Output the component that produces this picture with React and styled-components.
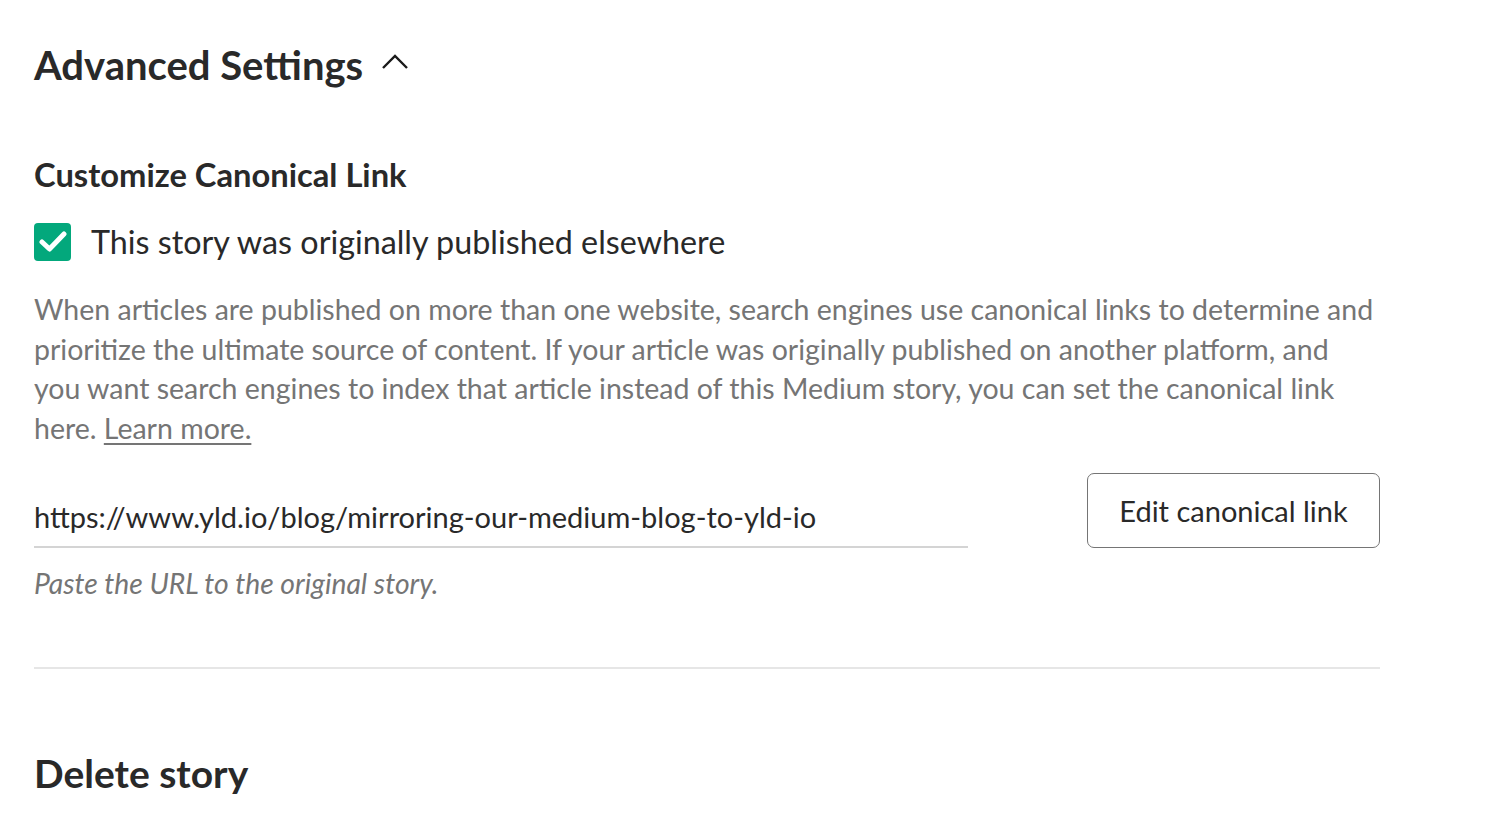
import React from "react";
import styled, { createGlobalStyle } from "styled-components";

const GlobalStyle = createGlobalStyle`
  body {
    margin: 0;
    background: #fff;
    font-family: Lato, "Open Sans", sans-serif;
    color: rgba(0, 0, 0, 0.84);
  }
`;

const Page = styled.div`
  width: 1346px;
  padding: 40px 0 0 34px;
`;

const Title = styled.h1`
  display: flex;
  align-items: center;
  gap: 18px;
  margin: 0;
  font-size: 40px;
  line-height: 50px;
  font-weight: 700;
  color: #292929;
`;

const Caret = styled.svg`
  width: 28px;
  height: 18px;
  margin-top: -6px;
`;

const SubTitle = styled.h2`
  margin: 65px 0 0;
  font-size: 32.7px;
  line-height: 40px;
  font-weight: 700;
  color: #292929;
`;

const CheckRow = styled.label`
  display: flex;
  align-items: center;
  gap: 20px;
  margin-top: 27px;
  font-size: 32.3px;
  line-height: 40px;
  color: #292929;
`;

const Box = styled.span`
  width: 37px;
  height: 38px;
  border-radius: 4px;
  background: #03a87c;
  display: flex;
  align-items: center;
  justify-content: center;
`;

const Help = styled.p`
  margin: 28px 0 0;
  font-size: 28.5px;
  line-height: 39.7px;
  color: #757575;
  white-space: nowrap;
`;

const More = styled.a`
  color: #757575;
  text-decoration: underline;
  text-underline-offset: 4px;
`;

const LinkRow = styled.div`
  display: flex;
  align-items: flex-start;
  justify-content: space-between;
  margin-top: 24px;
`;

const Field = styled.div`
  width: 934px;
  padding-top: 24px;
`;

const UrlText = styled.div`
  font-size: 29px;
  line-height: 40px;
  color: #292929;
  padding-bottom: 9px;
  border-bottom: 2px solid #d4d4d4;
`;

const Hint = styled.div`
  margin-top: 17px;
  font-size: 28.3px;
  line-height: 36px;
  font-style: italic;
  color: #757575;
`;

const Button = styled.button`
  width: 293px;
  height: 75px;
  border: 1.5px solid #757575;
  border-radius: 7px;
  background: #fff;
  font-family: inherit;
  font-size: 29px;
  color: #292929;
`;

const Divider = styled.hr`
  margin: 66px 0 0;
  border: 0;
  border-top: 2px solid #e6e6e6;
`;

const Delete = styled.h2`
  margin: 79px 0 0;
  font-size: 39px;
  line-height: 50px;
  font-weight: 700;
  color: #292929;
`;

export default function App() {
  return (
    <>
      <GlobalStyle />
      <Page>
        <Title>
          Advanced Settings
          <Caret viewBox="0 0 28 18" fill="none" stroke="#1a1a1a" strokeWidth="2.4">
            <path d="M2 15 L14 3 L26 15" />
          </Caret>
        </Title>
        <SubTitle>Customize Canonical Link</SubTitle>
        <CheckRow>
          <Box>
            <svg width="28" height="22" viewBox="0 0 28 22" fill="none" stroke="#fff" strokeWidth="5" strokeLinecap="round" strokeLinejoin="round">
              <path d="M3 11 L10.5 18 L25 3" />
            </svg>
          </Box>
          This story was originally published elsewhere
        </CheckRow>
        <Help>
          When articles are published on more than one website, search engines use canonical links to determine and
          <br />
          prioritize the ultimate source of content. If your article was originally published on another platform, and
          <br />
          you want search engines to index that article instead of this Medium story, you can set the canonical link
          <br />
          here. <More>Learn more.</More>
        </Help>
        <LinkRow>
          <Field>
            <UrlText>https://www.yld.io/blog/mirroring-our-medium-blog-to-yld-io</UrlText>
            <Hint>Paste the URL to the original story.</Hint>
          </Field>
          <Button>Edit canonical link</Button>
        </LinkRow>
        <Divider />
        <Delete>Delete story</Delete>
      </Page>
    </>
  );
}
